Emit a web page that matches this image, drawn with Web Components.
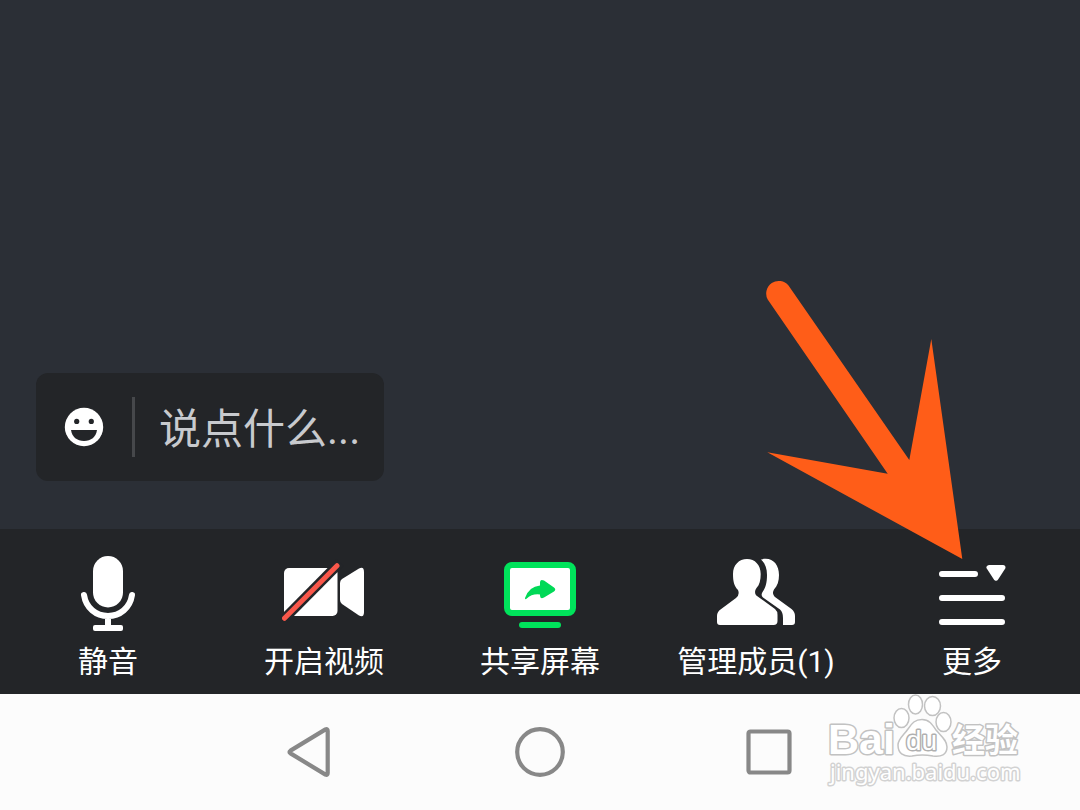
<!DOCTYPE html>
<html lang="zh-CN">
<head>
<meta charset="utf-8">
<meta name="viewport" content="width=device-width, initial-scale=1">
<title>会议</title>
<style>
html, body { margin: 0; }
body { font-family: Roboto, "Noto Sans CJK SC", sans-serif; }
</style>
</head>
<body>
<meeting-screen>
  <chat-box slot="stage" placeholder="说点什么..."></chat-box>
  <tool-bar slot="tools">
    <tool-button icon="mic">静音</tool-button>
    <tool-button icon="video">开启视频</tool-button>
    <tool-button icon="share">共享屏幕</tool-button>
    <tool-button icon="members">管理成员(1)</tool-button>
    <tool-button icon="more">更多</tool-button>
  </tool-bar>
  <system-nav slot="nav"><site-mark></site-mark></system-nav>
  <pointer-arrow slot="overlay"></pointer-arrow>
</meeting-screen>
<script>
const define = (name, html, setup) => customElements.define(name, class extends HTMLElement {
  connectedCallback() {
    if (this.shadowRoot) return;
    const template = document.createElement('template');
    template.innerHTML = html;
    this.attachShadow({ mode: 'open' }).append(template.content.cloneNode(true));
    if (setup) setup(this);
  }
});

define('meeting-screen', `
<style>
:host { display: flex; flex-direction: column; position: relative; min-height: 100vh; background: #2b2f36; overflow: hidden; }
main { flex: 1; display: flex; align-items: flex-end; padding: 48px 36px; }
</style>
<main><slot name="stage"></slot></main>
<slot name="tools"></slot>
<slot name="nav"></slot>
<slot name="overlay"></slot>`);

define('chat-box', `
<style>
:host { display: block; width: 348px; max-width: 100%; }
form { display: flex; align-items: center; gap: 24px; height: 108px; padding: 0 24px; box-sizing: border-box; border-radius: 12px; background: #232528; }
button { flex: none; padding: 0; border: 0; background: none; display: block; }
svg { display: block; }
i { flex: none; width: 3px; height: 60px; background: #46484b; }
input { flex: 1; min-width: 0; width: 0; height: 60px; box-sizing: border-box; padding: 4px 0 0; border: 0; background: none; outline: none; font: inherit; font-size: 42px; color: #c8cace; }
input::placeholder { color: #c8cace; opacity: 1; }
</style>
<form>
  <button type="button" aria-label="表情"><svg width="48" height="48" viewBox="0 0 48 48">
    <circle cx="24" cy="24" r="19.2" fill="#fff"/>
    <g fill="#232528"><circle cx="16.7" cy="18.4" r="2.6"/><circle cx="31.3" cy="18.4" r="2.6"/><path d="M11 27H37C36 34 31 38 24 38S12 34 11 27Z"/></g>
  </svg></button>
  <i></i>
  <input type="text" aria-label="聊天内容">
</form>`, el => {
  el.shadowRoot.querySelector('input').placeholder = el.getAttribute('placeholder');
});

define('tool-bar', `
<style>
:host { display: grid; grid-template-columns: repeat(5, minmax(0, 1fr)); padding: 23px 0 14px; background: #232528; }
</style>
<slot></slot>`);

const icons = {
  mic: `<rect x="27" y="4" width="30" height="51.5" rx="15" fill="#fff"/>
    <path d="M18 43C20 56 30 64 42 64S64 56 66 43M42 64V75" fill="none" stroke="#fff" stroke-width="6" stroke-linecap="round"/>
    <rect x="27" y="73" width="30" height="6" rx="2" fill="#fff"/>`,
  video: `<rect x="2" y="16" width="53.5" height="48" rx="5" fill="#fff"/>
    <path d="M58 31Q58 28.500 60 27L77 16.500Q82 14 82 20V60Q82 66 77 63.500L60 52Q58 50.500 58 48Z" fill="#fff"/>
    <path d="M0 69L58 10.500" stroke="#232528" stroke-width="10"/>
    <path d="M2.500 66.300L55 13.700" stroke="#f9574a" stroke-width="5" stroke-linecap="round"/>`,
  share: `<rect x="9" y="13" width="66" height="48" rx="5" fill="#fff" stroke="#00e35b" stroke-width="6"/>
    <rect x="21" y="70" width="42" height="6" rx="3" fill="#00e35b"/>
    <path d="M27 46Q31 34.500 42 33.500V31Q42 26.500 46 28.500L56 35.500Q58.500 37.500 56 39.500L46 45.500Q42 47.500 42 43.500V42.500Q34 41.500 28.500 46.800Q27 48 27 46Z" fill="#00d957"/>`,
  members: `<g fill="#fff"><path d="M33 7C41 7 46.700 13 46.700 22C46.700 28 45.500 33 42.500 36C40.500 38.500 40.500 42 43 44L61 57Q63.500 59 63.500 63V69Q63.500 73 59.500 73H6Q3 73 3 70V64Q3 60 6.500 57.500L22 46Q26 42.500 24 38C20 34 19 29 19 22C19 13 25 7 33 7Z"/>
    <path d="M47 7.500C58 4.500 65 12 65 23C65 29 63.500 34 60 37.500C58.500 40 58.500 42.500 61 45L77.500 57Q81 60 81 64V70Q81 73 78 73H69V66Q69 60 66 57.500L49 45.500Q46.500 43.500 48.500 40C51.500 36 53 31 53 23C53 16 51 11 47 7.500Z"/></g>`,
  more: `<g stroke="#fff" stroke-width="6" stroke-linecap="round"><path d="M12 22H45M12 46H72M12 70H72"/></g>
    <path d="M59 15.500H73L66 26.200Z" fill="#fff" stroke="#fff" stroke-width="5" stroke-linejoin="round"/>`
};

define('tool-button', `
<style>
:host { display: block; }
button { display: flex; flex-direction: column; align-items: center; gap: 8px; width: 100%; padding: 0; border: 0; background: none; color: #fff; font: inherit; font-size: 30px; line-height: 36px; white-space: nowrap; }
svg { display: block; }
</style>
<button type="button"><svg width="84" height="84" viewBox="0 0 84 84" aria-hidden="true"></svg><span><slot></slot></span></button>`, el => {
  el.shadowRoot.querySelector('svg').innerHTML = icons[el.getAttribute('icon')];
});

define('system-nav', `
<style>
:host { display: block; position: relative; background: #fcfcfc; }
nav { display: flex; justify-content: center; gap: 170px; padding: 28px 0; }
button { padding: 0; border: 0; background: none; }
svg { display: block; fill: none; stroke: #888; stroke-width: 4.2; stroke-linejoin: round; }
</style>
<nav>
  <button type="button" aria-label="返回"><svg width="60" height="60" viewBox="0 0 60 60"><path d="M10.500 28.600L45.500 7.400Q47.700 6.500 47.700 9V51Q47.700 53.500 45.500 52.600L10.500 31.400Q8.500 30 10.500 28.600Z"/></svg></button>
  <button type="button" aria-label="主页"><svg width="60" height="60" viewBox="0 0 60 60"><circle cx="30" cy="30" r="22.800"/></svg></button>
  <button type="button" aria-label="最近任务"><svg width="60" height="60" viewBox="0 0 60 60"><rect x="8.500" y="9.500" width="41" height="41" rx="2"/></svg></button>
</nav>
<slot></slot>`);

define('site-mark', `
<style>
:host { display: block; position: absolute; right: 50px; top: 0; pointer-events: none; }
svg { display: block; overflow: visible; }
text { paint-order: stroke; stroke-linejoin: round; fill: #fff; stroke: #c2c2c2; stroke-width: 3px; }
.latin { font: bold 43px "Liberation Sans", sans-serif; }
.du { font: 28px "Liberation Sans", sans-serif; stroke: #b0b0b0; }
.cjk { font: bold 33px "Noto Sans CJK SC", sans-serif; }
.url { font: 22px "Noto Sans", sans-serif; stroke: #d2d2d2; }
</style>
<svg width="204" height="100" viewBox="0 0 204 100">
  <text class="latin" x="2" y="60">Bai</text>
  <g fill="#fff" stroke="#c2c2c2" stroke-width="1.500">
    <ellipse cx="75.500" cy="24" rx="7.500" ry="9.500"/><ellipse cx="89.500" cy="10.500" rx="7" ry="9.500"/><ellipse cx="106.500" cy="12" rx="8" ry="9.500"/><ellipse cx="117.500" cy="28" rx="7.500" ry="9.500"/>
    <path d="M96 25.500C103 25.500 106 30 110 36C115 42 121 46 121 53C121 61 115 63 107 62Q96 60 86 62C77 63 72 59 72 51C72 45 78 41 82 35C86 29 89 25.500 96 25.500Z"/>
  </g>
  <text class="du" x="80" y="56">du</text>
  <text class="cjk" x="126" y="58">经验</text>
  <text class="url" x="4" y="86">jingyan.baidu.com</text>
</svg>`);

define('pointer-arrow', `
<style>
:host { display: block; position: absolute; right: 110px; bottom: 245px; pointer-events: none; }
svg { display: block; }
</style>
<svg width="210" height="290" viewBox="0 0 210 290" aria-hidden="true">
  <path d="M7.700 24.500A12.600 12.600 0 0 1 28.500 10.500L149.300 185L171.300 64L202.300 284L7.300 177.300L127.700 198.700Z" fill="#ff5d18"/>
</svg>`);
</script>
</body>
</html>
